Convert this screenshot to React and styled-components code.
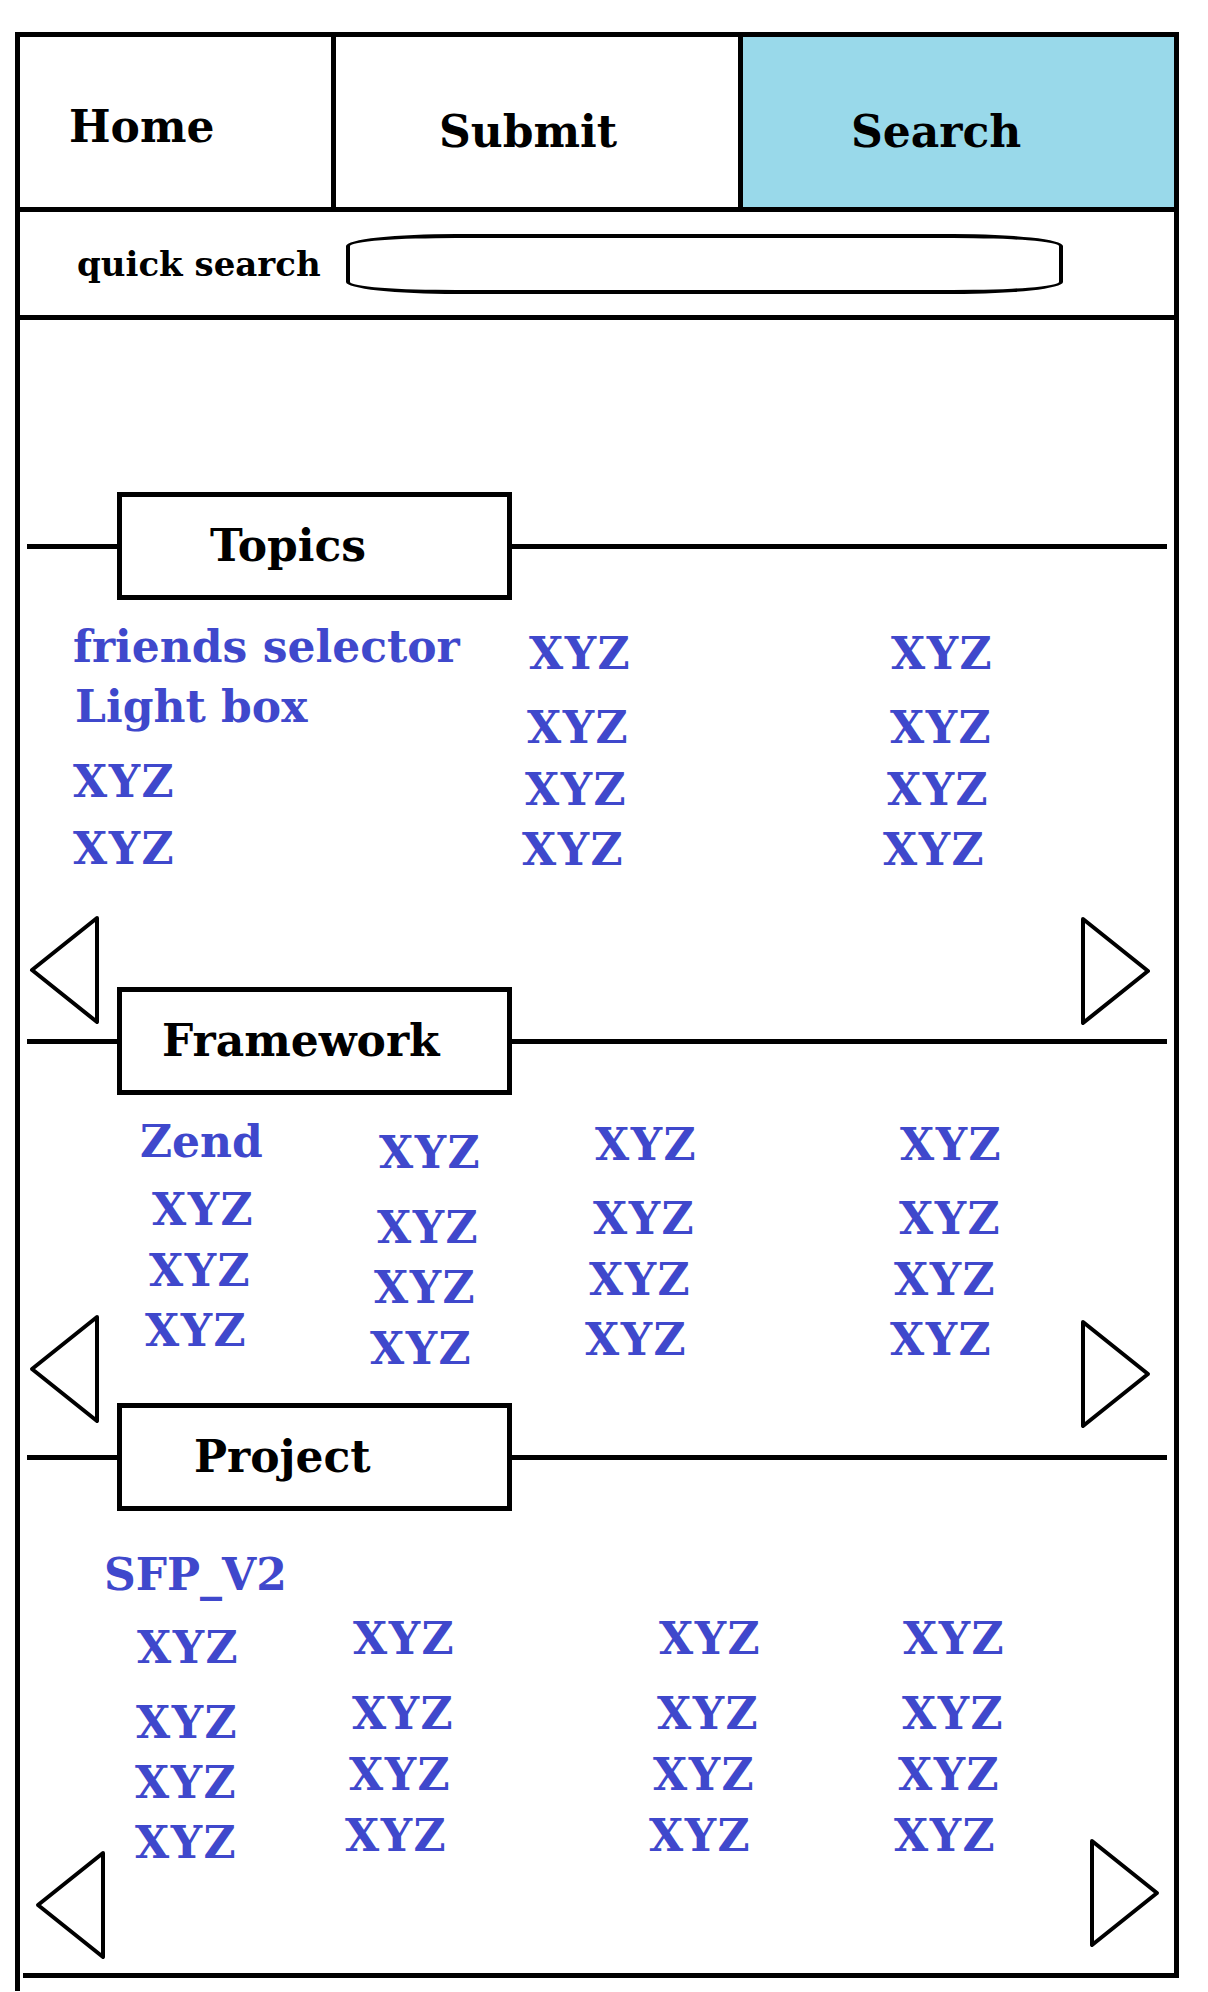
import styled, { createGlobalStyle } from "styled-components";

const INK = "#000";
const BLUE = "#3f48cc";
const SKY = "#99d9ea";

const GlobalStyle = createGlobalStyle`
  html, body {
    margin: 0;
    padding: 0;
    background: #fff;
  }
  body {
    font-family: "DejaVu Serif", "Liberation Serif", serif;
    font-weight: bold;
  }
`;

// [label, space above, nudge left/right]
const sections = [
  {
    title: "Topics",
    indent: 88,
    pb: 115,
    pl: 53,
    cols: "453px 362px 1fr",
    columns: [
      { pt: 25, items: [["friends selector", 0], ["Light box", 16, 2], ["XYZ", 31], ["XYZ", 23]] },
      { pt: 32, items: [["XYZ", 0, 3], ["XYZ", 30, 1], ["XYZ", 18, -1], ["XYZ", 16, -4]] },
      { pt: 32, items: [["XYZ", 0, 3], ["XYZ", 30, 2], ["XYZ", 18, -1], ["XYZ", 16, -5]] },
    ],
    arrows: { left: [9, -38], right: [23, -39] },
  },
  {
    title: "Framework",
    indent: 40,
    pb: 32,
    pl: 127,
    cols: "228px 215px 305px 1fr",
    columns: [
      { pt: 25, items: [["Zend", 0, -7], ["XYZ", 24, 5], ["XYZ", 17, 2], ["XYZ", 16, -2]] },
      { pt: 36, items: [["XYZ", 0, 4], ["XYZ", 31, 2], ["XYZ", 16, -1], ["XYZ", 17, -5]] },
      { pt: 28, items: [["XYZ", 0, 5], ["XYZ", 30, 3], ["XYZ", 17, -1], ["XYZ", 16, -5]] },
      { pt: 28, items: [["XYZ", 0, 5], ["XYZ", 30, 4], ["XYZ", 17, -1], ["XYZ", 16, -5]] },
    ],
    arrows: { left: [9, -21], right: [23, -26] },
  },
  {
    title: "Project",
    indent: 72,
    pb: 108,
    lead: "SFP_V2",
    pl: 116,
    cols: "214px 305px 244px 1fr",
    columns: [
      { pt: 29, items: [["XYZ", 0, 1], ["XYZ", 31, 0], ["XYZ", 16, -1], ["XYZ", 16, -1]] },
      { pt: 20, items: [["XYZ", 0, 3], ["XYZ", 31, 2], ["XYZ", 17, -1], ["XYZ", 17, -5]] },
      { pt: 20, items: [["XYZ", 0, 4], ["XYZ", 31, 2], ["XYZ", 17, -2], ["XYZ", 17, -6]] },
      { pt: 20, items: [["XYZ", 0, 4], ["XYZ", 31, 3], ["XYZ", 17, -1], ["XYZ", 17, -5]] },
    ],
    arrows: { left: [15, 13], right: [14, 25] },
  },
];

const Frame = styled.div`
  box-sizing: border-box;
  width: 1164px;
  margin: 32px 0 0 15px;
  border: 5px solid ${INK};
  border-bottom: none;
`;

const Tail = styled.div`
  width: 5px;
  height: 13px;
  margin-left: 15px;
  background: ${INK};
`;

const NavBar = styled.nav`
  box-sizing: border-box;
  display: grid;
  grid-template-columns: 316px 407px 1fr;
  height: 175px;
  border-bottom: 5px solid ${INK};
`;

const NavCell = styled.div`
  box-sizing: border-box;
  display: flex;
  align-items: flex-start;
  padding: ${(p) => p.$top}px 0 0 ${(p) => p.$pad}px;
  background: ${(p) => (p.$active ? SKY : "#fff")};
  border-right: ${(p) => (p.$last ? "none" : `5px solid ${INK}`)};
  font-size: 44px;
  line-height: 44px;
  color: ${INK};
`;

const SearchRow = styled.div`
  box-sizing: border-box;
  display: flex;
  align-items: center;
  gap: 25px;
  height: 108px;
  padding-left: 57px;
  border-bottom: 5px solid ${INK};
`;

const SearchLabel = styled.label`
  font-size: 34px;
  line-height: 34px;
  color: ${INK};
  white-space: nowrap;
`;

const SearchInput = styled.input`
  box-sizing: border-box;
  width: 717px;
  height: 60px;
  border: 4px solid ${INK};
  border-radius: 110px / 12px;
  background: #fff;
  outline: none;
`;

const Main = styled.main`
  padding-top: 172px;
`;

const Section = styled.section`
  position: relative;
  padding-bottom: ${(p) => p.$pb}px;
`;

const Header = styled.div`
  display: flex;
  align-items: center;
  height: 108px;
  padding: 0 7px;
`;

const Rule = styled.div`
  height: 5px;
  background: ${INK};
  ${(p) => (p.$grow ? "flex: 1;" : "width: 90px;")}
`;

const TitleBox = styled.h2`
  box-sizing: border-box;
  display: flex;
  align-items: center;
  width: 395px;
  height: 108px;
  margin: 0;
  padding-left: ${(p) => p.$indent}px;
  border: 5px solid ${INK};
  font-size: 44px;
  line-height: 44px;
  font-weight: bold;
  color: ${INK};
`;

const Grid = styled.div`
  display: grid;
  grid-template-columns: ${(p) => p.$cols};
  padding-left: ${(p) => p.$pl}px;
  align-items: start;
`;

const Column = styled.div`
  display: flex;
  flex-direction: column;
  align-items: flex-start;
  padding-top: ${(p) => p.$pt}px;
`;

const Item = styled.a`
  display: block;
  margin: ${(p) => p.$mt || 0}px 0 0 ${(p) => p.$dx || 0}px;
  font-size: 44px;
  line-height: 44px;
  letter-spacing: ${(p) => (p.$caps ? "1.5px" : "0")};
  color: ${BLUE};
  text-decoration: none;
  white-space: nowrap;
`;

const Lead = styled(Item)`
  margin: 42px 0 0 84px;
`;

const Pager = styled.button`
  position: absolute;
  ${(p) => p.$side}: ${(p) => p.$inset}px;
  bottom: ${(p) => p.$bottom}px;
  width: 72px;
  height: 110px;
  padding: 0;
  border: none;
  background: none;

  svg {
    display: block;
  }
`;

const BottomRule = styled.div`
  height: 5px;
  margin-left: 3px;
  background: ${INK};
`;

const Arrow = ({ dir }) => (
  <svg width="72" height="110" viewBox="0 0 72 110">
    <polygon
      points={dir === "left" ? "68,3 3,55 68,107" : "4,3 69,55 4,107"}
      fill="none"
      stroke={INK}
      strokeWidth="4"
      strokeLinejoin="round"
    />
  </svg>
);

const Carousel = ({ data }) => (
  <Section $pb={data.pb}>
    <Header>
      <Rule />
      <TitleBox $indent={data.indent}>{data.title}</TitleBox>
      <Rule $grow />
    </Header>
    {data.lead && <Lead href="#">{data.lead}</Lead>}
    <Grid $cols={data.cols} $pl={data.pl}>
      {data.columns.map((col, i) => (
        <Column key={i} $pt={col.pt}>
          {col.items.map(([label, mt, dx], j) => (
            <Item key={j} href="#" $mt={mt} $dx={dx} $caps={label === label.toUpperCase()}>
              {label}
            </Item>
          ))}
        </Column>
      ))}
    </Grid>
    <Pager $side="left" $inset={data.arrows.left[0]} $bottom={data.arrows.left[1]}>
      <Arrow dir="left" />
    </Pager>
    <Pager $side="right" $inset={data.arrows.right[0]} $bottom={data.arrows.right[1]}>
      <Arrow dir="right" />
    </Pager>
  </Section>
);

export default function App() {
  return (
    <>
      <GlobalStyle />
      <Frame>
        <NavBar>
          <NavCell $pad={49} $top={68}>Home</NavCell>
          <NavCell $pad={103} $top={73}>Submit</NavCell>
          <NavCell $pad={108} $top={73} $active $last>
            Search
          </NavCell>
        </NavBar>
        <SearchRow>
          <SearchLabel>quick search</SearchLabel>
          <SearchInput type="text" />
        </SearchRow>
        <Main>
          {sections.map((s) => (
            <Carousel key={s.title} data={s} />
          ))}
        </Main>
        <BottomRule />
      </Frame>
      <Tail />
    </>
  );
}
